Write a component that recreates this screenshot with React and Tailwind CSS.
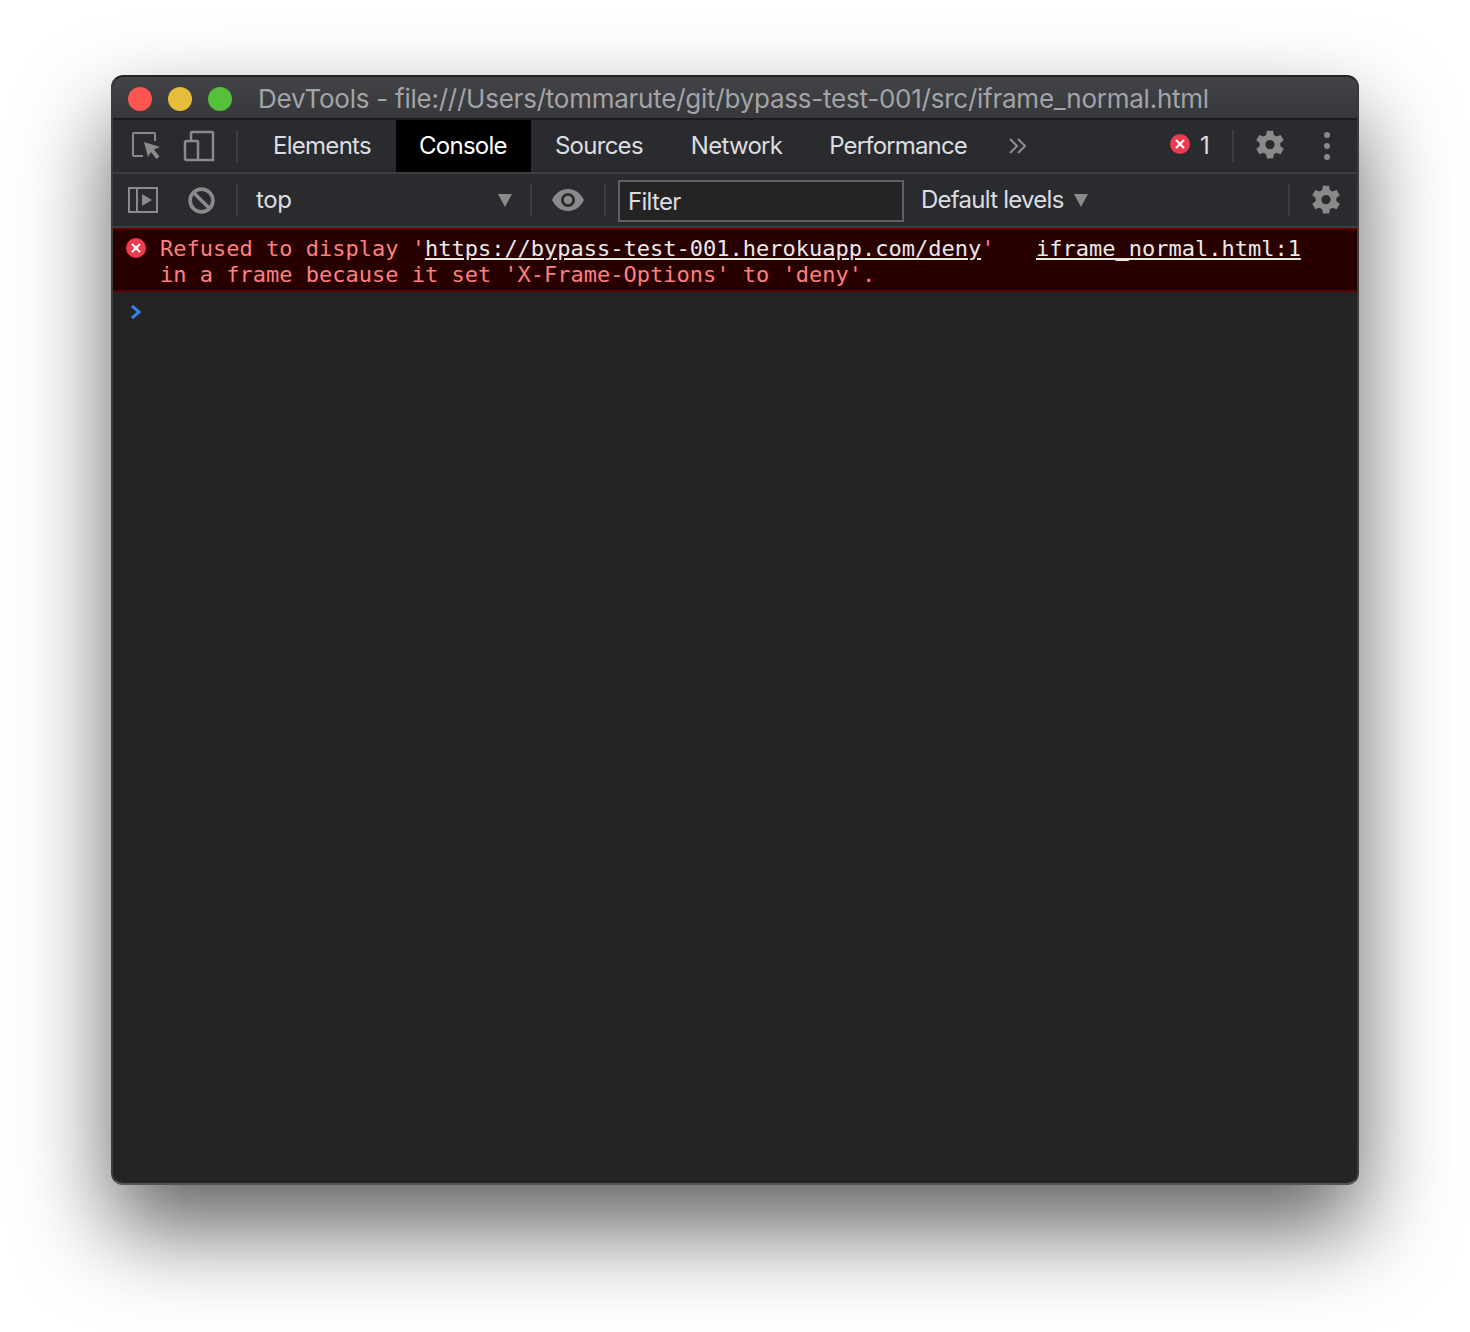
import { X } from 'lucide-react';

const sans = "font-['Inter','Liberation_Sans',sans-serif]";

function Gear({ className }) {
  return (
    <svg viewBox="0 0 24 24" className={className} fill="currentColor">
      <path fillRule="evenodd" d="M14.2 1.2l.5 3 1.9 1.1 2.9-1.1 2.2 3.8-2.4 1.9v2.2l2.4 1.9-2.2 3.8-2.9-1.1-1.9 1.1-.5 3H9.8l-.5-3-1.9-1.1-2.9 1.1-2.2-3.8 2.4-1.9V9.9L2.3 8l2.2-3.8 2.9 1.1 1.9-1.1.5-3h4.400zM12 7.700a3.300 3.300 0 1 0 0 6.600 3.300 3.300 0 0 0 0-6.600z" />
    </svg>
  );
}

function Sep({ className = '' }) {
  return <div className={`w-[2px] h-8 bg-[#3c3e42] shrink-0 ${className}`} />;
}

function Tab({ label, active, className = 'px-[24px]' }) {
  return (
    <div
      className={`h-full flex items-center text-[24px] tracking-[-0.72px] ${className} ${
        active ? 'bg-black text-white' : 'text-[#dcdde0]'
      }`}
    >
      {label}
    </div>
  );
}

function ErrorDot({ className }) {
  return (
    <div className={`rounded-full bg-[#ec3b4d] flex items-center justify-center shrink-0 ${className}`}>
      <X size={14} strokeWidth={3.5} className="text-white" />
    </div>
  );
}

export default function App() {
  return (
    <div className={`w-[1470px] h-[1332px] bg-white pt-[75px] pl-[111px] overflow-hidden ${sans}`}>
      <div className="w-[1248px] h-[1110px] rounded-[12px] bg-[#242424] border-2 border-[#3c3c3e] border-t-[#232325] border-b-[#555557] flex flex-col overflow-hidden shadow-[0_44px_90px_rgba(0,0,0,0.62)]">
        {/* title bar */}
        <div className="h-[43px] shrink-0 bg-gradient-to-b from-[#434448] to-[#36373a] border-b-2 border-[#1c1c1e] flex items-center pl-[15px] pt-[2px]">
          <div className="flex gap-[16px]">
            <div className="w-6 h-6 rounded-full bg-[#fd5650]" />
            <div className="w-6 h-6 rounded-full bg-[#e6bd3b]" />
            <div className="w-6 h-6 rounded-full bg-[#55c03b]" />
          </div>
          <div className="ml-[26px] text-[26px] tracking-[-0.24px] text-[#a3a4a7] whitespace-nowrap">
            DevTools - file:///Users/tommarute/git/bypass-test-001/src/iframe_normal.html
          </div>
        </div>

        {/* tab bar */}
        <div className="h-[52px] shrink-0 bg-[#2a2b2f] flex items-center">
          <svg viewBox="0 0 30 30" className="w-[30px] h-[30px] ml-[18px] text-[#8a8a8a]" fill="none" stroke="currentColor" strokeWidth="2">
            <path d="M12 25H3a1 1 0 0 1-1-1V3a1 1 0 0 1 1-1h20a1 1 0 0 1 1 1v7" />
            <path d="M13 11l16 5-6 2.500 5.500 7-3 2.500-5.500-7-3 5z" fill="currentColor" stroke="none" />
          </svg>
          <svg viewBox="0 0 32 32" className="w-[32px] h-[32px] ml-[22px] text-[#8a8a8a]" fill="none" stroke="currentColor" strokeWidth="2.500">
            <path d="M8 11V3a1 1 0 0 1 1-1h20a1 1 0 0 1 1 1v27H4a2 2 0 0 1-2-2V13a2 2 0 0 1 2-2h10a1 1 0 0 1 1 1v18" />
          </svg>
          <Sep className="ml-[21px]" />
          <div className="h-full flex ml-[11px]">
            <Tab label="Elements" className="pl-[24px] pr-[25px]" />
            <Tab label="Console" active className="pl-[23px] pr-[24px]" />
            <Tab label="Sources" className="pl-[24px] pr-[24px]" />
            <Tab label="Network" className="pl-[24px] pr-[23px]" />
            <Tab label="Performance" className="pl-[24px] pr-[25px] tracking-[-0.85px]" />
          </div>
          <svg viewBox="0 0 20 20" className="w-[20px] h-[20px] ml-[16px] text-[#8e8f91]" fill="none" stroke="currentColor" strokeWidth="2">
            <path d="M2 3l7 7-7 7M10 3l7 7-7 7" />
          </svg>
          <ErrorDot className="w-5 h-5 ml-auto mb-1" />
          <div className="text-[24px] text-[#dcdde0] ml-[10px] w-[12px]">1</div>
          <Sep className="ml-[20px]" />
          <Gear className="w-[34px] h-[34px] ml-[19px] text-[#8a8a8a]" />
          <div className="flex flex-col gap-[5px] ml-[37px] mr-[27px]">
            <div className="w-[6px] h-[6px] rounded-full bg-[#8a8a8a]" />
            <div className="w-[6px] h-[6px] rounded-full bg-[#8a8a8a]" />
            <div className="w-[6px] h-[6px] rounded-full bg-[#8a8a8a]" />
          </div>
        </div>

        {/* console toolbar */}
        <div className="h-[56px] shrink-0 bg-[#2a2b2f] border-y-2 border-[#3c3e42] flex items-center">
          <svg viewBox="0 0 30 26" className="w-[30px] h-[26px] ml-[15px] text-[#8a8a8a]" fill="none" stroke="currentColor" strokeWidth="2">
            <rect x="1" y="1" width="28" height="24" />
            <path d="M9 1v24" />
            <path d="M14 7l10 6-10 6z" fill="currentColor" stroke="none" />
          </svg>
          <svg viewBox="0 0 26 26" className="w-[27px] h-[27px] ml-[30px] text-[#8a8a8a]" fill="none" stroke="currentColor" strokeWidth="3.500">
            <circle cx="13" cy="13" r="11" />
            <path d="M5.500 5.500l15 15" />
          </svg>
          <Sep className="ml-[21px]" />
          <div className="text-[24px] tracking-[-0.4px] text-[#dcdde0] ml-[18px] w-[239px]">top</div>
          <div className="w-0 h-0 border-x-[7px] border-x-transparent border-t-[13px] border-t-[#8a8a8a] ml-[3px]" />
          <Sep className="ml-[18px]" />
          <svg viewBox="0 0 32 22" className="w-[32px] h-[22px] ml-[20px] text-[#8a8a8a]">
            <path fillRule="evenodd" fill="currentColor" d="M16 0c7 0 13 4.500 16 11-3 6.500-9 11-16 11S3 17.500 0 11C3 4.500 9 0 16 0zm0 4a7 7 0 1 0 0 14 7 7 0 0 0 0-14z" />
            <circle cx="16" cy="11" r="4.200" fill="currentColor" />
          </svg>
          <Sep className="ml-[20px]" />
          <div className="w-[286px] h-[42px] ml-[12px] mt-[2px] pt-[2px] bg-[#242424] border-2 border-[#5f6063] flex items-center pl-[8px] text-[24px] tracking-[-0.7px] text-[#dcdde0]">
            Filter
          </div>
          <div className="text-[24px] tracking-[-0.75px] text-[#dcdde0] ml-[17px] whitespace-nowrap">Default levels</div>
          <div className="w-0 h-0 border-x-[7px] border-x-transparent border-t-[13px] border-t-[#8a8a8a] ml-[10px]" />
          <Sep className="ml-auto" />
          <Gear className="w-[34px] h-[34px] ml-[19px] mr-[14px] mt-[2px] text-[#8a8a8a]" />
        </div>

        {/* error message */}
        <div className="h-[64px] shrink-0 bg-[#280000] border-y-2 border-y-[#5c0000] flex font-['DejaVu_Sans_Mono','Liberation_Mono',monospace] text-[22px] leading-[26px] text-[#fe7f7f] relative whitespace-pre">
          <ErrorDot className="w-5 h-5 ml-[13px] mt-[8px]" />
          <div className="ml-[14px] pt-[6px]">
            <div>
              Refused to display '<span className="underline text-[#ece9e9]">https://bypass-test-001.herokuapp.com/deny</span>'
            </div>
            <div>in a frame because it set 'X-Frame-Options' to 'deny'.</div>
          </div>
          <div className="absolute left-[923px] top-[6px] underline text-[#ece9e9]">iframe_normal.html:1</div>
        </div>

        {/* prompt */}
        <div className="pl-[17px] pt-[12px]">
          <svg viewBox="0 0 12 16" className="w-[12px] h-[16px] text-[#3b7de8]" fill="none" stroke="currentColor" strokeWidth="3">
            <path d="M2 2l7 6-7 6" />
          </svg>
        </div>
      </div>
    </div>
  );
}
